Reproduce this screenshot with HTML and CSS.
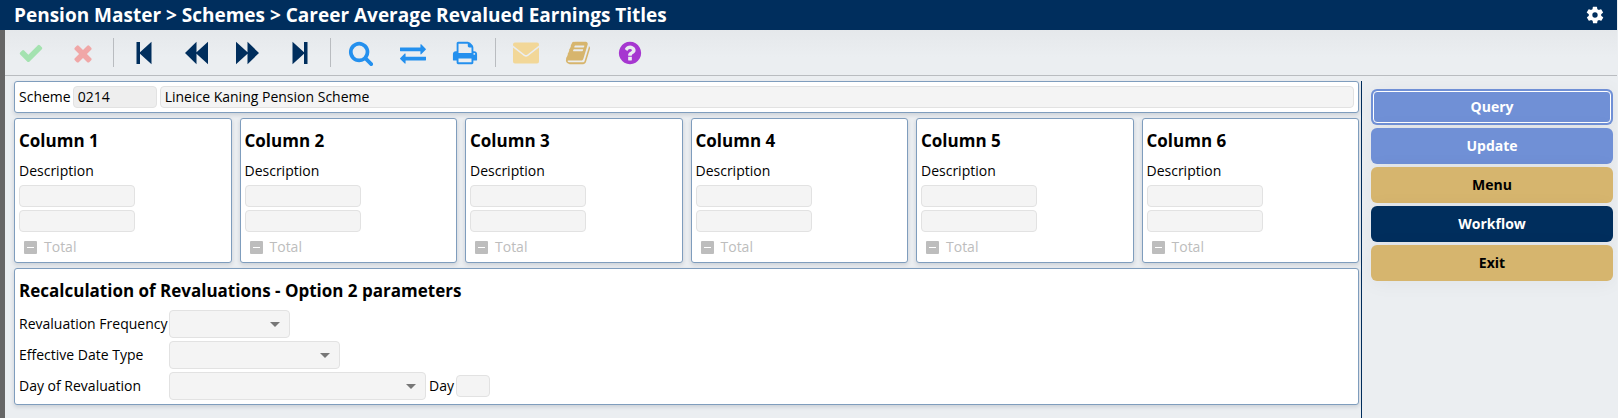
FILE: index.html
```html
<!DOCTYPE html>
<html lang="en">
<head>
<meta charset="utf-8">
<title>Career Average Revalued Earnings Titles</title>
<link rel="stylesheet" href="styles.css">
</head>
<body>
<header class="titlebar">
  <h1 class="title">Pension Master &gt; Schemes &gt; Career Average Revalued Earnings Titles</h1>
  <button class="gear" type="button" aria-label="Settings"><svg viewBox="0 0 24 24"><path d="M19.4 13a7.500 7.500 0 0 0 0-2l2.100-1.600a.5.5 0 0 0 .1-.7l-2-3.400a.5.5 0 0 0-.6-.2l-2.500 1a7.300 7.300 0 0 0-1.700-1l-.4-2.700a.5.5 0 0 0-.5-.4h-4a.5.5 0 0 0-.5.4l-.4 2.700a7.300 7.300 0 0 0-1.700 1l-2.500-1a.5.5 0 0 0-.6.2l-2 3.400a.5.5 0 0 0 .1.700L4.600 11a7.500 7.500 0 0 0 0 2l-2.100 1.600a.5.5 0 0 0-.1.700l2 3.400c.1.200.4.300.6.200l2.500-1a7.300 7.300 0 0 0 1.700 1l.4 2.700c0 .2.200.4.500.4h4c.3 0 .5-.2.500-.4l.4-2.700a7.300 7.300 0 0 0 1.700-1l2.500 1c.2.100.5 0 .6-.2l2-3.400a.5.5 0 0 0-.1-.7zM12 15.200a3.200 3.200 0 1 1 0-6.400 3.200 3.200 0 0 1 0 6.400z"/></svg></button>
</header>
<div class="window">
  <nav class="toolbar" aria-label="Toolbar">
    <button class="tool green" type="button" aria-label="Accept" disabled><svg viewBox="0 0 1792 1792"><path d="M1671 566q0 40-28 68l-724 724-136 136q-28 28-68 28t-68-28l-136-136-362-362q-28-28-28-68t28-68l136-136q28-28 68-28t68 28l294 295 656-657q28-28 68-28t68 28l136 136q28 28 28 68z"/></svg></button>
    <button class="tool red" type="button" aria-label="Cancel" disabled><svg viewBox="0 0 1792 1792"><path d="M1490 1322q0 40-28 68l-136 136q-28 28-68 28t-68-28l-294-294-294 294q-28 28-68 28t-68-28l-136-136q-28-28-28-68t28-68l294-294-294-294q-28-28-28-68t28-68l136-136q28-28 68-28t68 28l294 294 294-294q28-28 68-28t68 28l136 136q28 28 28 68t-28 68l-294 294 294 294q28 28 28 68z"/></svg></button>
    <span class="sep"></span>
    <button class="tool navy" type="button" aria-label="First"><svg viewBox="0 0 26 26"><path d="M5.500 2H9V12.300L20.500 1.800V24.200L9 13.700V24H5.500z"/></svg></button>
    <button class="tool navy" type="button" aria-label="Previous"><svg viewBox="0 0 26 26"><path d="M2 13L13.500 1.800V12.300L25 1.800V24.200L13.500 13.700V24.200z"/></svg></button>
    <button class="tool navy" type="button" aria-label="Next"><svg viewBox="0 0 26 26"><path d="M24 13L12.500 1.800V12.300L1 1.800V24.200L12.500 13.700V24.200z"/></svg></button>
    <button class="tool navy" type="button" aria-label="Last"><svg viewBox="0 0 26 26"><path d="M20.500 2H17V12.300L5.500 1.800V24.200L17 13.700V24H20.500z"/></svg></button>
    <span class="sep"></span>
    <button class="tool blue" type="button" aria-label="Search"><svg viewBox="0 0 1792 1792"><path d="M1216 832q0-185-131.500-316.500t-316.500-131.500-316.500 131.500-131.500 316.500 131.500 316.500 316.500 131.500 316.500-131.500 131.500-316.500zm512 832q0 52-38 90t-90 38q-54 0-90-38l-343-342q-179 124-399 124-143 0-273.500-55.500t-225-150-150-225-55.500-273.500 55.500-273.500 150-225 225-150 273.500-55.500 273.500 55.500 225 150 150 225 55.500 273.500q0 220-124 399l343 343q37 37 37 90z"/></svg></button>
    <button class="tool blue" type="button" aria-label="Switch"><svg viewBox="0 0 1792 1792"><path d="M1792 1184v192q0 13-9.500 22.500t-22.500 9.500h-1376v192q0 13-9.500 22.500t-22.500 9.500q-12 0-24-10l-319-320q-9-9-9-22 0-14 9-23l320-320q9-9 23-9 13 0 22.500 9.500t9.500 22.500v192h1376q13 0 22.500 9.500t9.500 22.500zm0-544q0 14-9 23l-320 320q-9 9-23 9-13 0-22.500-9.500t-9.500-22.500v-192h-1376q-13 0-22.500-9.500t-9.500-22.500v-192q0-13 9.500-22.500t22.500-9.500h1376v-192q0-14 9-23t23-9q12 0 24 10l319 319q9 9 9 23z"/></svg></button>
    <button class="tool blue" type="button" aria-label="Print"><svg viewBox="0 0 1792 1792"><path d="M448 1536h896v-256h-896v256zm0-640h896v-384h-160q-40 0-68-28t-28-68v-160h-640v640zm1152 64q0-26-19-45t-45-19-45 19-19 45 19 45 45 19 45-19 19-45zm128 0v416q0 13-9.500 22.500t-22.500 9.500h-224v160q0 40-28 68t-68 28h-960q-40 0-68-28t-28-68v-160h-224q-13 0-22.500-9.500t-9.500-22.500v-416q0-79 56.500-135.500t135.500-56.500h64v-544q0-40 28-68t68-28h672q40 0 88 20t76 48l152 152q28 28 48 76t20 88v256h64q79 0 135.500 56.500t56.500 135.500z"/></svg></button>
    <span class="sep"></span>
    <button class="tool cream" type="button" aria-label="Mail" disabled><svg viewBox="0 0 26 26"><path d="M2 2.500H24Q26 2.500 26 4.500V5.500L14.500 14.500Q13 15.500 11.500 14.500L0 5.500V4.500Q0 2.500 2 2.500zM0 7.500L11 16Q13 17.300 15 16L26 7.500V21.500Q26 23.500 24 23.500H2Q0 23.500 0 21.500z"/></svg></button>
    <button class="tool gold" type="button" aria-label="Notes"><svg viewBox="0 0 1792 1792"><path d="M1703 478q40 57 18 129l-275 906q-19 64-76.500 107.500t-122.500 43.500h-923q-77 0-148.500-53.500t-99.500-131.500q-24-67-2-127 0-4 3-27t4-37q1-8-3-21.500t-3-19.500q2-11 8-21t16.500-23.500 16.500-23.500q23-38 45-91.500t30-91.500q3-10 .5-30t-.5-28q3-11 17-28t17-23q21-36 42-92t25-90q1-9-2.500-32t.5-28q4-13 22-30.500t22-22.500q19-26 42.500-84.500t27.500-96.500q1-8-3-25.500t-2-26.500q2-8 9-18t18-23 17-21q8-12 16.500-30.500t15-35 16-36 19.500-32 26.500-23.500 36-11.500 47.500 5.500l-1 3q38-9 51-9h761q74 0 114 56t18 130l-274 906q-36 119-71.500 153.500t-128.500 34.500h-869q-27 0-38 15-11 16-1 43 24 70 144 70h923q29 0 56-15.500t35-41.500l300-987q7-22 5-57 38 15 59 43zm-1064 2q-4 13 2 22.500t20 9.500h608q13 0 25.500-9.500t16.500-22.500l21-64q4-13-2-22.500t-20-9.500h-608q-13 0-25.500 9.500t-16.500 22.500zm-83 256q-4 13 2 22.500t20 9.500h608q13 0 25.500-9.500t16.500-22.500l21-64q4-13-2-22.500t-20-9.500h-608q-13 0-25.500 9.500t-16.500 22.500z"/></svg></button>
    <button class="tool purple" type="button" aria-label="Help"><svg viewBox="0 0 1792 1792"><path d="M1024 1376v-192q0-14-9-23t-23-9h-192q-14 0-23 9t-9 23v192q0 14 9 23t23 9h192q14 0 23-9t9-23zm256-672q0-88-55.500-163t-138.500-116-170-41q-243 0-371 213-15 24 8 42l132 100q7 6 19 6 16 0 25-12 53-68 86-92 34-24 86-24 48 0 85.500 26t37.500 59q0 38-20 61t-68 45q-63 28-115.500 86.500t-52.500 125.500v36q0 14 9 23t23 9h192q14 0 23-9t9-23q0-19 21.500-49.500t54.500-49.500q32-18 49-28.500t46-35 44.500-48 28-60.500 12.500-81zm384 192q0 209-103 385.500t-279.500 279.500-385.500 103-385.500-103-279.500-279.500-103-385.500 103-385.500 279.500-279.500 385.500-103 385.500 103 279.500 279.500 103 385.500z"/></svg></button>
  </nav>
  <div class="content">
    <main class="main">
      <section class="panel scheme">
        <label for="scheme">Scheme</label>
        <input class="field code" id="scheme" value="0214" readonly>
        <input class="field grow" aria-label="Scheme name" value="Lineice Kaning Pension Scheme" readonly>
      </section>
      <div class="columns">
        <section class="panel column">
          <h2>Column 1</h2>
          <label for="c1">Description</label>
          <input class="field" id="c1" readonly>
          <input class="field" aria-label="Description line 2" readonly>
          <label class="total"><input type="checkbox" disabled>Total</label>
        </section>
        <section class="panel column">
          <h2>Column 2</h2>
          <label for="c2">Description</label>
          <input class="field" id="c2" readonly>
          <input class="field" aria-label="Description line 2" readonly>
          <label class="total"><input type="checkbox" disabled>Total</label>
        </section>
        <section class="panel column">
          <h2>Column 3</h2>
          <label for="c3">Description</label>
          <input class="field" id="c3" readonly>
          <input class="field" aria-label="Description line 2" readonly>
          <label class="total"><input type="checkbox" disabled>Total</label>
        </section>
        <section class="panel column">
          <h2>Column 4</h2>
          <label for="c4">Description</label>
          <input class="field" id="c4" readonly>
          <input class="field" aria-label="Description line 2" readonly>
          <label class="total"><input type="checkbox" disabled>Total</label>
        </section>
        <section class="panel column">
          <h2>Column 5</h2>
          <label for="c5">Description</label>
          <input class="field" id="c5" readonly>
          <input class="field" aria-label="Description line 2" readonly>
          <label class="total"><input type="checkbox" disabled>Total</label>
        </section>
        <section class="panel column">
          <h2>Column 6</h2>
          <label for="c6">Description</label>
          <input class="field" id="c6" readonly>
          <input class="field" aria-label="Description line 2" readonly>
          <label class="total"><input type="checkbox" disabled>Total</label>
        </section>
      </div>
      <section class="panel recalc">
        <h2>Recalculation of Revaluations - Option 2 parameters</h2>
        <div class="row"><label class="name" for="freq">Revaluation Frequency</label><select class="pick small" id="freq"></select></div>
        <div class="row"><label class="name" for="type">Effective Date Type</label><select class="pick medium" id="type"></select></div>
        <div class="row"><label class="name" for="dayrev">Day of Revaluation</label><select class="pick large" id="dayrev"></select><label class="daylabel" for="day">Day</label><input class="field day" id="day" readonly></div>
      </section>
    </main>
    <aside class="actions">
      <button class="action periwinkle focused" type="button">Query</button>
      <button class="action periwinkle" type="button">Update</button>
      <button class="action sand" type="button">Menu</button>
      <button class="action dark" type="button">Workflow</button>
      <button class="action sand" type="button">Exit</button>
    </aside>
  </div>
</div>
</body>
</html>
```
FILE: styles.css
```css
* { box-sizing: border-box; }

body {
  margin: 0;
  min-height: 100vh;
  display: flex;
  flex-direction: column;
  background: #ebeef1;
  border-right: 1px solid #ebeef1;
  color: #000;
  font: 14px/20px "Open Sans", "Noto Sans", sans-serif;
}

button, input, select { font: inherit; color: inherit; margin: 0; }

.titlebar {
  display: flex;
  align-items: center;
  justify-content: space-between;
  height: 30px;
  padding: 0 12px 0 14px;
  background: #002e5d;
  color: #fff;
}
.title { margin: 0; font-size: 19px; line-height: 28px; font-weight: 700; white-space: nowrap; }
.gear { width: 20px; height: 20px; padding: 0; border: 0; background: none; }
.gear svg { display: block; width: 20px; height: 20px; fill: #fff; }

.window {
  flex: 1;
  display: flex;
  flex-direction: column;
  border-left: 5px solid #666;
}

.toolbar {
  display: flex;
  align-items: center;
  height: 46px;
  border-bottom: 1px solid #b9bcc0;
  background: linear-gradient(#e5e8eb, #ebeef1 60%);
}
.tool {
  display: flex;
  align-items: center;
  justify-content: center;
  width: 52px;
  height: 44px;
  padding: 0;
  border: 0;
  background: none;
}
.tool svg { width: 26px; height: 26px; fill: currentColor; }
.sep { width: 1px; height: 29px; margin: 0 4px; background: #b9bcc0; }
.green { color: #a4e2b0; }
.red { color: #f0a7a7; }
.navy { color: #002e5d; }
.blue { color: #2490ee; }
.cream { color: #f2d798; }
.gold { color: #d7b56d; }
.purple { color: #a637d0; }

.content { flex: 1; display: flex; padding-top: 5px; }
.main {
  flex: 1;
  display: flex;
  flex-direction: column;
  gap: 5px;
  padding: 0 2px 13px 9px;
  border-right: 1px solid #002e5d;
}
.panel {
  background: #fff;
  border: 1px solid #7f9dbd;
  border-radius: 3px;
  box-shadow: 0 2px 4px rgba(0, 30, 60, 0.14);
}
.panel h2 { margin: 0; font-size: 17px; line-height: 24px; font-weight: 700; }

.field {
  height: 22px;
  padding: 0 4px;
  border: 1px solid #e2e2e2;
  border-radius: 4px;
  background: #f4f4f4;
  outline: 0;
}

.scheme { display: flex; align-items: center; height: 32px; padding: 0 4px; }
.scheme .field { padding: 0 4px 2px; }
.scheme .code { width: 84px; margin: 0 3px 0 2px; background: #eee; }
.grow { flex: 1; }

.columns { display: grid; grid-template-columns: repeat(6, 1fr); gap: 8px; }
.column { display: flex; flex-direction: column; align-items: flex-start; padding: 10px 4px 5px; }
.column h2 { margin-bottom: 8px; }
.column > label:first-of-type { margin-bottom: 4px; }
.column .field { width: 116px; margin-bottom: 3px; }
.total { display: flex; align-items: center; gap: 7px; margin: 2px 0 0 5px; color: #bdbdbd; }
.total input {
  appearance: none;
  display: grid;
  place-items: center;
  width: 13px;
  height: 13px;
  border-radius: 1px;
  background: #bdbdbd;
}
.total input::before { content: ""; width: 7px; height: 1px; background: #fff; }

.recalc { display: flex; flex-direction: column; gap: 3px; padding: 10px 4px 4px; }
.recalc h2 { margin-bottom: 4px; }
.row { display: flex; align-items: center; }
.name { width: 150px; white-space: nowrap; }
.pick {
  appearance: none;
  height: 28px;
  border: 1px solid #e2e2e2;
  border-radius: 4px;
  background: #f4f4f4 url("data:image/svg+xml,%3Csvg xmlns='http://www.w3.org/2000/svg' width='10' height='5'%3E%3Cpath d='M0 0h10L5 5z' fill='%23777'/%3E%3C/svg%3E") no-repeat right 9px center;
  opacity: 1;
}
.small { width: 121px; }
.medium { width: 171px; }
.large { width: 257px; }
.daylabel { margin: 0 2px 0 3px; }
.day { width: 34px; }

.actions {
  display: flex;
  flex-direction: column;
  gap: 3px;
  width: 255px;
  padding: 8px 4px 0 9px;
}
.action {
  height: 36px;
  border: 0;
  border-radius: 6px;
  font-weight: 700;
  text-align: center;
  box-shadow: 0 2px 20px rgba(0, 30, 60, 0.05);
}
.periwinkle { background: #7090d6; color: #fff; }
.sand { background: #d6b56e; color: #000; }
.dark { background: #002e5d; color: #fff; }
.focused { outline: 1px solid #fff; outline-offset: -3px; }
```
